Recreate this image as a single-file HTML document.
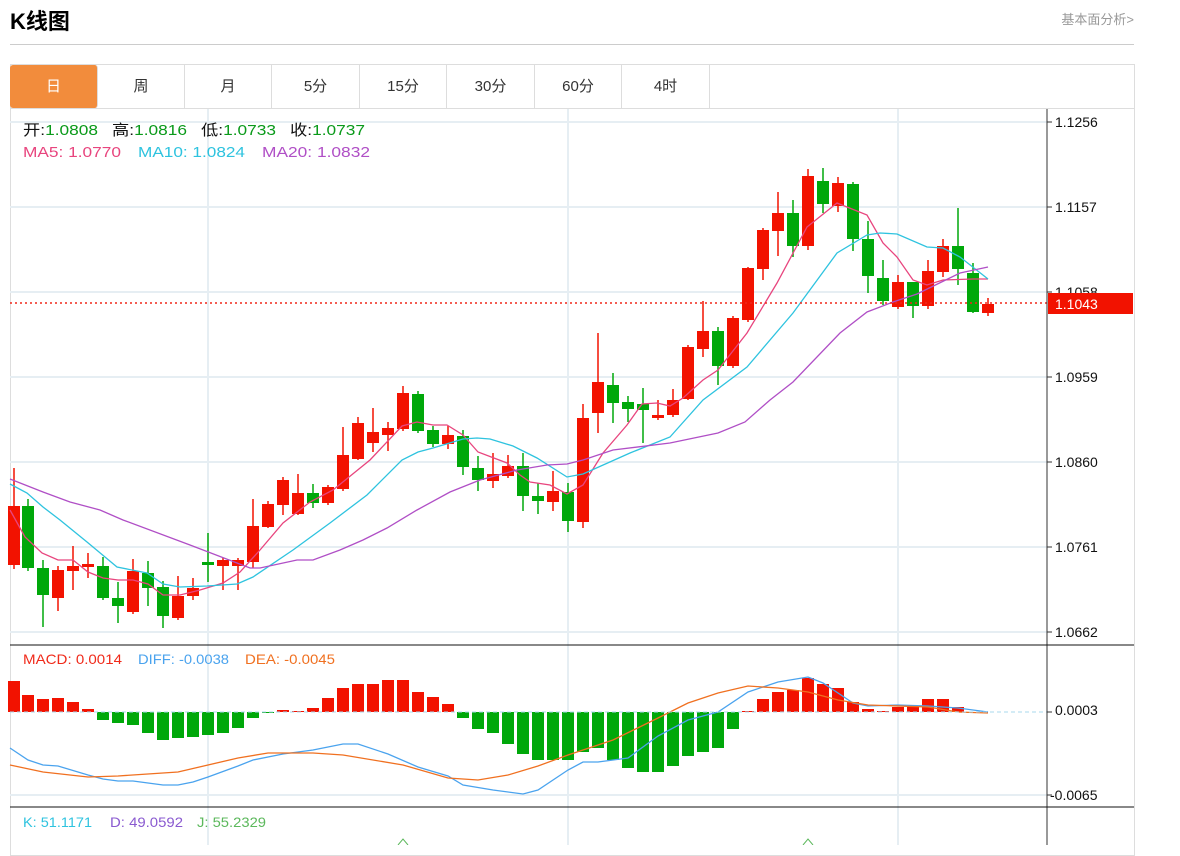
<!DOCTYPE html>
<html><head><meta charset="utf-8">
<style>
body{margin:0;background:#fff;width:1180px;height:845px;overflow:hidden;font-family:"Liberation Sans","Noto Sans CJK SC",sans-serif;}
.t{position:absolute;left:10px;top:4px;font-size:22px;font-weight:bold;color:#000;}
.r{position:absolute;right:46px;top:9px;font-size:13px;color:#999;}
.hl{position:absolute;left:10px;top:44px;width:1124px;height:1px;background:#ccc;}
.box{position:absolute;left:10px;top:64px;width:1123px;height:790px;border:1px solid #ddd;}
.tabs{position:absolute;left:10px;top:65px;height:43px;width:1124px;border-bottom:1px solid #ddd;}
.tab{position:absolute;top:0;height:43px;line-height:43px;text-align:center;font-size:15px;color:#333;border-right:1px solid #ddd;}
.tab.on{background:#f28c3c;color:#fff;border-radius:3px;}
svg{position:absolute;left:0;top:0;}
</style></head><body>
<div class="t">K线图</div>
<div class="r">基本面分析&gt;</div>
<div class="hl"></div>
<div class="box"></div>
<div class="tabs">
<div class="tab on" style="left:0;width:87px">日</div>
<div class="tab" style="left:88px;width:86px">周</div>
<div class="tab" style="left:175px;width:86px">月</div>
<div class="tab" style="left:262px;width:87px">5分</div>
<div class="tab" style="left:350px;width:86px">15分</div>
<div class="tab" style="left:437px;width:87px">30分</div>
<div class="tab" style="left:525px;width:86px">60分</div>
<div class="tab" style="left:612px;width:87px">4时</div>
</div>
<svg id="s" width="1180" height="845" font-family="Liberation Sans, Noto Sans CJK SC, sans-serif">
<g stroke="#e6eef3" stroke-width="2">
<line x1="10" y1="122" x2="1047" y2="122"/><line x1="10" y1="207" x2="1047" y2="207"/>
<line x1="10" y1="292" x2="1047" y2="292"/><line x1="10" y1="377" x2="1047" y2="377"/>
<line x1="10" y1="462" x2="1047" y2="462"/><line x1="10" y1="547" x2="1047" y2="547"/>
<line x1="10" y1="632" x2="1047" y2="632"/>
<line x1="10" y1="795" x2="1047" y2="795"/>
<line x1="208" y1="109" x2="208" y2="845"/><line x1="568" y1="109" x2="568" y2="845"/><line x1="898" y1="109" x2="898" y2="845"/>
</g>
<g id="c"></g>
<line x1="10" y1="712" x2="1047" y2="712" stroke="#a8d8ee" stroke-dasharray="4,3"/>
<line x1="10" y1="303" x2="1047" y2="303" stroke="#f0271a" stroke-dasharray="2,3" stroke-width="1.5"/>
<line x1="1047" y1="109" x2="1047" y2="845" stroke="#333"/>
<line x1="10" y1="645" x2="1134" y2="645" stroke="#111"/>
<line x1="10" y1="807" x2="1134" y2="807" stroke="#111"/>
<g stroke="#333">
<line x1="1047" y1="122" x2="1052" y2="122"/><line x1="1047" y1="207" x2="1052" y2="207"/><line x1="1047" y1="292" x2="1052" y2="292"/><line x1="1047" y1="377" x2="1052" y2="377"/><line x1="1047" y1="462" x2="1052" y2="462"/><line x1="1047" y1="547" x2="1052" y2="547"/><line x1="1047" y1="632" x2="1052" y2="632"/><line x1="1047" y1="712" x2="1052" y2="712"/><line x1="1047" y1="795" x2="1052" y2="795"/>
</g>
<g font-size="14" fill="#111">
<text x="1055" y="127">1.1256</text><text x="1055" y="212">1.1157</text><text x="1055" y="297">1.1058</text><text x="1055" y="382">1.0959</text><text x="1055" y="467">1.0860</text><text x="1055" y="552">1.0761</text><text x="1055" y="637">1.0662</text>
<text x="1055" y="715">0.0003</text><text x="1050" y="800">-0.0065</text>
</g>
<rect x="1048" y="293" width="85" height="21" fill="#f21200"/>
<text x="1055" y="309" font-size="14" fill="#fff">1.1043</text>
<g font-size="15">
<text x="23" y="135" fill="#111" textLength="75" lengthAdjust="spacingAndGlyphs">开:<tspan fill="#0a9a1a">1.0808</tspan></text>
<text x="112" y="135" fill="#111" textLength="75" lengthAdjust="spacingAndGlyphs">高:<tspan fill="#0a9a1a">1.0816</tspan></text>
<text x="201" y="135" fill="#111" textLength="75" lengthAdjust="spacingAndGlyphs">低:<tspan fill="#0a9a1a">1.0733</tspan></text>
<text x="290" y="135" fill="#111" textLength="75" lengthAdjust="spacingAndGlyphs">收:<tspan fill="#0a9a1a">1.0737</tspan></text>
<text x="23" y="157" fill="#e8457e" textLength="98" lengthAdjust="spacingAndGlyphs">MA5: 1.0770</text>
<text x="138" y="157" fill="#2ec3df" textLength="107" lengthAdjust="spacingAndGlyphs">MA10: 1.0824</text>
<text x="262" y="157" fill="#b04fc6" textLength="108" lengthAdjust="spacingAndGlyphs">MA20: 1.0832</text>
</g>
<g font-size="14">
<text x="23" y="664" fill="#f02a1a" textLength="99" lengthAdjust="spacingAndGlyphs">MACD: 0.0014</text>
<text x="138" y="664" fill="#4aa3ee" textLength="91" lengthAdjust="spacingAndGlyphs">DIFF: -0.0038</text>
<text x="245" y="664" fill="#f07020" textLength="90" lengthAdjust="spacingAndGlyphs">DEA: -0.0045</text>
<text x="23" y="827" fill="#2ec3df" textLength="69" lengthAdjust="spacingAndGlyphs">K: 51.1171</text>
<text x="110" y="827" fill="#8a5ad0" textLength="73" lengthAdjust="spacingAndGlyphs">D: 49.0592</text>
<text x="197" y="827" fill="#5cb85c" textLength="69" lengthAdjust="spacingAndGlyphs">J: 55.2329</text>
</g>
<path d="M398 845 L403 839 L408 845 M803 845 L808 839 L813 845" stroke="#5cb85c" fill="none"/>
</svg>
<script>
var C=[[14,506,565,468,569,'r'],[28,506,568,499,571,'g'],[43,568,595,560,627,'g'],[58,570,598,566,611,'r'],[73,566,571,546,590,'r'],[88,564,567,553,578,'r'],[103,566,598,557,600,'g'],[118,598,606,582,623,'g'],[133,571,612,559,614,'r'],[148,573,588,561,606,'g'],[163,587,616,581,628,'g'],[178,596,618,576,620,'r'],[193,588,596,578,600,'r'],[208,562,565,533,582,'g'],[223,560,566,558,590,'r'],[238,560,566,558,590,'r'],[253,526,562,499,568,'r'],[268,504,527,501,528,'r'],[283,480,505,477,515,'r'],[298,493,514,474,515,'r'],[313,493,503,484,508,'g'],[328,487,503,485,505,'r'],[343,455,489,427,491,'r'],[358,423,459,417,460,'r'],[373,432,443,408,452,'r'],[388,428,435,422,451,'r'],[403,393,429,386,431,'r'],[418,394,431,391,433,'g'],[433,430,444,426,447,'g'],[448,435,444,426,449,'r'],[463,436,467,430,475,'g'],[478,468,480,456,491,'g'],[493,474,481,453,488,'r'],[508,466,476,455,478,'r'],[523,466,496,453,511,'g'],[538,496,501,483,514,'g'],[553,491,502,471,511,'r'],[568,492,521,483,532,'g'],[583,418,522,404,528,'r'],[598,382,413,333,433,'r'],[613,385,403,373,423,'g'],[628,402,409,396,422,'g'],[643,404,410,388,443,'g'],[658,415,418,400,420,'r'],[673,400,415,389,417,'r'],[688,347,399,345,400,'r'],[703,331,349,301,357,'r'],[718,331,366,327,385,'g'],[733,318,366,316,368,'r'],[748,268,320,267,322,'r'],[763,230,269,228,280,'r'],[778,213,231,192,256,'r'],[793,213,246,200,257,'g'],[808,176,246,169,250,'r'],[823,181,204,168,213,'g'],[838,183,206,177,212,'r'],[853,184,239,182,251,'g'],[868,239,276,221,293,'g'],[883,278,301,260,305,'g'],[898,282,307,275,309,'r'],[913,282,306,282,318,'g'],[928,271,306,260,309,'r'],[943,246,272,239,277,'r'],[958,246,269,208,285,'g'],[973,273,312,263,313,'g'],[988,304,313,298,316,'r']];
var M=[[14,681],[28,695],[43,699],[58,698],[73,702],[88,709],[103,720],[118,723],[133,725],[148,733],[163,740],[178,738],[193,737],[208,735],[223,733],[238,728],[253,718],[268,713],[283,710],[298,711],[313,708],[328,698],[343,688],[358,684],[373,684],[388,680],[403,680],[418,692],[433,697],[448,704],[463,718],[478,729],[493,733],[508,744],[523,754],[538,760],[553,760],[568,760],[583,752],[598,748],[613,760],[628,768],[643,772],[658,772],[673,766],[688,756],[703,752],[718,748],[733,729],[748,711],[763,699],[778,692],[793,690],[808,678],[823,684],[838,688],[853,702],[868,709],[883,711],[898,707],[913,707],[928,699],[943,699],[958,707],[973,713]];
var L={'#e8457e':'10,510 25,537 42,553 58,560 73,560 88,572 103,578 118,580 133,580 148,584 163,595 180,595 200,590 223,583 240,572 260,550 283,523 310,502 333,490 370,460 402,426 417,422 433,425 447,425 463,435 478,452 507,463 520,475 530,482 550,485 567,494 583,485 603,453 627,425 642,404 657,403 670,406 683,398 703,380 718,370 747,333 777,283 807,227 837,203 867,215 883,243 897,257 913,280 927,285 943,280 973,279 988,279',
'#2ec3df':'10,484 27,493 43,507 60,520 87,542 117,567 147,573 163,584 180,587 207,586 237,584 253,577 293,550 330,523 367,495 402,460 418,452 433,448 463,439 477,438 490,439 513,446 537,458 567,477 583,474 630,453 670,437 703,400 747,367 793,313 837,253 867,235 880,233 897,234 927,247 943,248 960,257 988,279',
'#b04fc6':'10,479 43,492 70,502 100,510 123,520 190,545 250,568 260,568 297,560 313,560 340,550 363,540 387,528 417,510 450,492 480,480 517,470 547,465 567,464 583,460 613,450 670,443 718,433 745,422 770,400 793,382 840,333 867,312 893,302 917,294 960,273 988,267',
'#4aa3ee':'10,748 28,760 43,765 58,766 88,775 103,779 118,781 133,781 163,785 178,785 193,782 208,777 238,766 253,760 283,754 313,750 343,744 358,744 388,754 418,767 448,776 463,785 493,790 523,794 538,790 568,770 583,762 598,762 628,758 658,736 688,720 718,712 748,692 778,682 808,677 823,683 838,693 853,703 868,706 898,705 928,706 958,708 988,712',
'#f07020':'10,765 43,772 88,777 118,776 178,772 238,758 268,753 313,753 343,755 403,765 448,778 478,780 508,775 538,766 568,755 613,740 658,718 688,703 718,693 748,686 778,688 808,692 838,700 868,705 928,707 958,712 988,713'};
var h='';
C.forEach(function(c){var col=c[5]=='r'?'#f21200':'#00a80a';var t=Math.min(c[1],c[2]),b=Math.max(c[1],c[2]);
h+='<line x1="'+c[0]+'" x2="'+c[0]+'" y1="'+c[3]+'" y2="'+c[4]+'" stroke="'+col+'" stroke-width="1.5"/>';
h+='<rect x="'+(c[0]-6)+'" y="'+t+'" width="12" height="'+Math.max(2,b-t)+'" fill="'+col+'"/>';});
M.forEach(function(m){var col=m[1]<712?'#f21200':'#00a80a';var t=Math.min(m[1],712),b=Math.max(m[1],712);
h+='<rect x="'+(m[0]-6)+'" y="'+t+'" width="12" height="'+Math.max(1,b-t)+'" fill="'+col+'"/>';});
for(var k in L){h+='<polyline points="'+L[k]+'" fill="none" stroke="'+k+'" stroke-width="1.3"/>';}
document.getElementById('c').innerHTML=h;
</script>
</body></html>
